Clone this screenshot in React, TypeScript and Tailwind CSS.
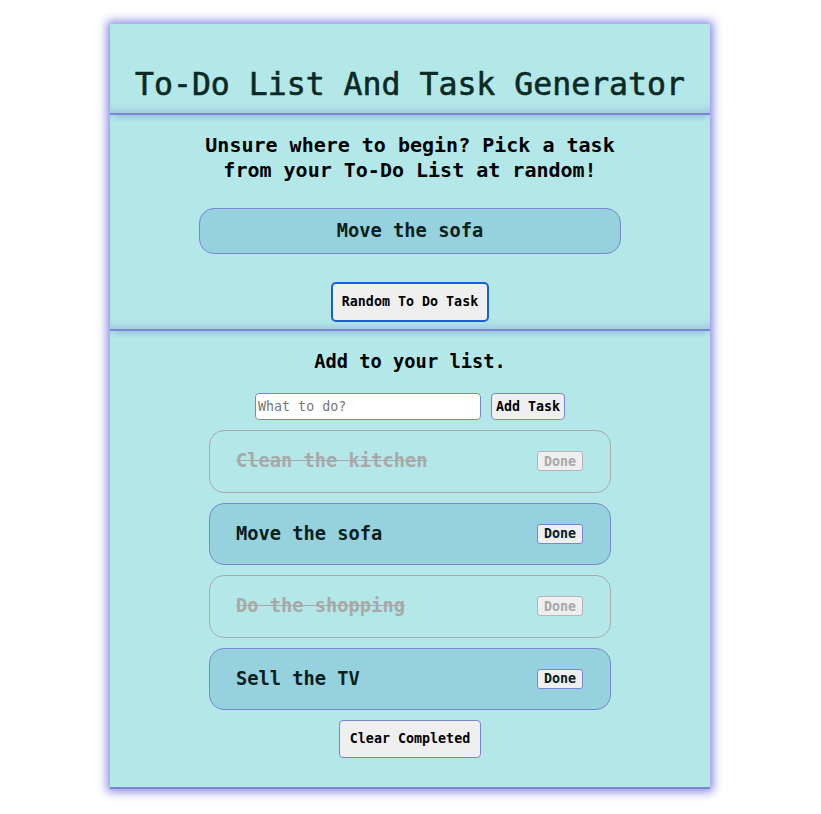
import { useState } from "react";

type Task = { id: number; text: string; done: boolean };

const initialTasks: Task[] = [
  { id: 1, text: "Clean the kitchen", done: true },
  { id: 2, text: "Move the sofa", done: false },
  { id: 3, text: "Do the shopping", done: true },
  { id: 4, text: "Sell the TV", done: false },
];

const mono = "font-['DejaVu_Sans_Mono','Liberation_Mono',monospace]";

export default function App() {
  const [tasks, setTasks] = useState<Task[]>(initialTasks);
  const [draft, setDraft] = useState("");
  const [picked, setPicked] = useState("Move the sofa");

  const pickRandom = () => {
    const open = tasks.filter((t) => !t.done);
    if (open.length) setPicked(open[Math.floor(Math.random() * open.length)].text);
  };

  const addTask = () => {
    if (!draft.trim()) return;
    setTasks([...tasks, { id: Date.now(), text: draft.trim(), done: false }]);
    setDraft("");
  };

  return (
    <div className={`min-h-screen bg-white pt-[24px] pb-[25px] ${mono}`}>
      <div className="ml-[110px] w-[600px] bg-[#b4e8e8] border-b-2 border-[#7b86d0] shadow-[0_0_9px_3px_rgba(110,110,220,0.8)]">
        <header className="h-[91px] pt-[33px] border-b-2 border-[#7b86d0] shadow-[0_5px_6px_-3px_rgba(90,100,200,0.35),inset_0_-8px_8px_-6px_rgba(90,100,200,0.3)]">
          <h1 className="h-[56px] flex items-center justify-center text-[31.5px] text-[#0a2a25] [-webkit-text-stroke:0.6px_#0a2a25]">
            To-Do List And Task Generator
          </h1>
        </header>

        <section className="pt-[18px] pb-[7px] flex flex-col items-center border-b-2 border-[#7b86d0] shadow-[0_5px_6px_-3px_rgba(90,100,200,0.35),inset_0_-8px_8px_-6px_rgba(90,100,200,0.3)]">
          <h2 className="text-[20px] leading-[25px] font-bold text-black text-center">
            Unsure where to begin? Pick a task
            <br />
            from your To-Do List at random!
          </h2>
          <div className="mt-[25px] w-[422px] h-[46px] rounded-[15px] bg-[#95d2dd] border border-[#7b86d0] flex items-center justify-center text-[18.72px] font-bold text-[#06201c]">
            {picked}
          </div>
          <button
            onClick={pickRandom}
            className="mt-[28px] w-[158px] h-[40px] rounded-[5px] bg-[#efefef] border-2 border-[#1a5fd6] text-[13.33px] font-bold text-black"
          >
            Random To Do Task
          </button>
        </section>

        <section className="pt-[19px] pb-[29px] flex flex-col items-center">
          <h3 className="text-[18.72px] leading-[23px] font-bold text-black">Add to your list.</h3>
          <div className="mt-[20px] flex gap-[10px]">
            <input
              value={draft}
              onChange={(e) => setDraft(e.target.value)}
              placeholder="What to do?"
              className="w-[226px] h-[27px] px-[2px] rounded-[4px] bg-white border border-[#7b86d0] text-[13.33px] placeholder:text-[#777] outline-none"
            />
            <button
              onClick={addTask}
              className="w-[74px] h-[27px] rounded-[4px] bg-[#efefef] border border-[#7b86d0] text-[13.33px] font-bold text-black"
            >
              Add Task
            </button>
          </div>

          <ul className="mt-[10px] flex flex-col gap-[10px]">
            {tasks.map((t) => (
              <li
                key={t.id}
                className={
                  t.done
                    ? "w-[402px] h-[62.5px] rounded-[15px] border border-[#a9a9a9] flex items-center justify-between pl-[26px] pr-[27px]"
                    : "w-[402px] h-[62.5px] rounded-[15px] border border-[#7b86d0] bg-[#95d2dd] flex items-center justify-between pl-[26px] pr-[27px]"
                }
              >
                <span
                  className={
                    t.done
                      ? "text-[18.72px] font-bold text-[#a8a8a8] line-through"
                      : "text-[18.72px] font-bold text-[#06201c]"
                  }
                >
                  {t.text}
                </span>
                <button
                  onClick={() => setTasks(tasks.map((x) => (x.id === t.id ? { ...x, done: true } : x)))}
                  className={
                    t.done
                      ? "w-[46px] h-[20px] rounded-[3px] bg-[#efefef] border border-[#b5b5b5] text-[13.33px] font-bold text-[#a8a8a8] leading-none"
                      : "w-[46px] h-[20px] rounded-[3px] bg-[#efefef] border border-[#7b86d0] text-[13.33px] font-bold text-[#06201c] leading-none"
                  }
                >
                  Done
                </button>
              </li>
            ))}
          </ul>

          <button
            onClick={() => setTasks(tasks.filter((t) => !t.done))}
            className="mt-[10px] w-[142px] h-[38px] rounded-[4px] bg-[#efefef] border border-[#7b86d0] text-[13.33px] font-bold text-black"
          >
            Clear Completed
          </button>
        </section>
      </div>
    </div>
  );
}
